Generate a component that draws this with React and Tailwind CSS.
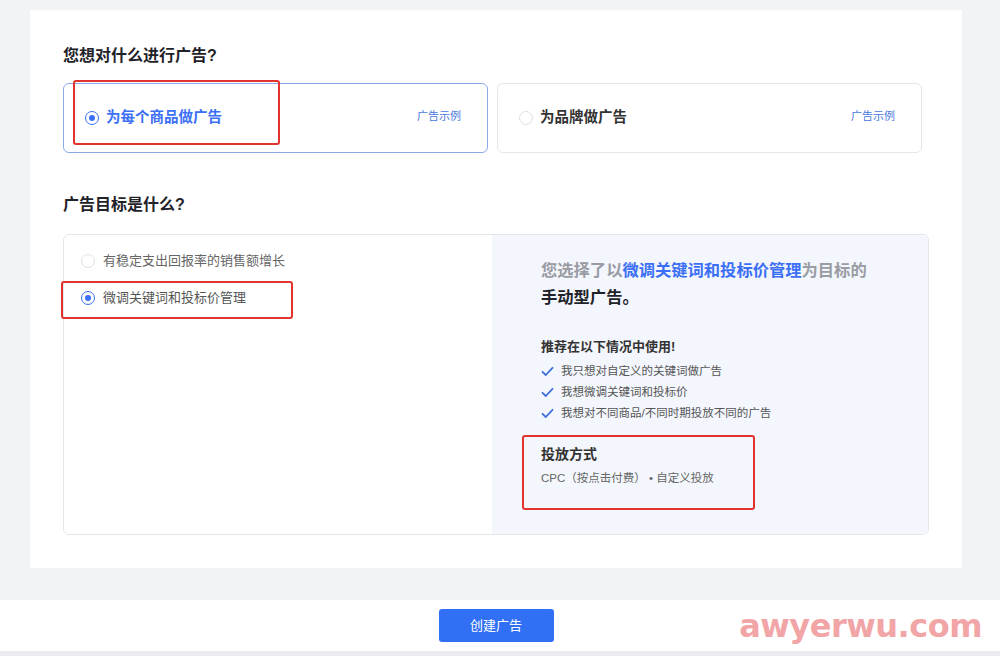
import { useState } from "react";

const FONT = { fontFamily: '"Liberation Sans", "Noto Sans CJK SC", sans-serif' };

function Radio({ checked }) {
  return checked ? (
    <span className="flex h-[14px] w-[14px] shrink-0 items-center justify-center rounded-full border border-[#3b6ff5] bg-white">
      <span className="h-[6px] w-[6px] rounded-full bg-[#3b6ff5]"></span>
    </span>
  ) : (
    <span className="h-[14px] w-[14px] shrink-0 rounded-full border border-[#dcdfe6] bg-white"></span>
  );
}

function Check() {
  return (
    <svg width="13" height="11" viewBox="0 0 13 11" className="shrink-0">
      <path d="M1.5 5.8 L4.8 9 L11.5 1.8" fill="none" stroke="#3d6fdc" strokeWidth="1.8" strokeLinecap="round" strokeLinejoin="round" />
    </svg>
  );
}

function RedMark({ className }) {
  return <div className={"pointer-events-none absolute rounded-[3px] border-2 border-[#e2332f] " + className}></div>;
}

export default function App() {
  const [tipo, setTipo] = useState("produto");
  const [meta, setMeta] = useState(1);

  const usos = [
    "我只想对自定义的关键词做广告",
    "我想微调关键词和投标价",
    "我想对不同商品/不同时期投放不同的广告",
  ];

  return (
    <div style={FONT} className="flex h-[656px] w-[1000px] flex-col overflow-hidden bg-[#f2f3f5]">
      <div className="pl-[30px] pt-[10px]">
        <div className="h-[558px] w-[932px] bg-white pl-[33px] pt-[36px]">
          <h2 className="text-[16px] font-bold leading-[20px] text-[#1f2329]">您想对什么进行广告?</h2>

          <div className="mt-[17px] flex gap-[9px]">
            <div
              onClick={() => setTipo("produto")}
              className="relative flex h-[70px] w-[425px] items-center justify-between rounded-[6px] border border-[#8aa9e8] pl-[21px] pr-[26px]"
            >
              <div className="flex items-center gap-[7px]">
                <Radio checked={tipo === "produto"} />
                <span className="text-[14.5px] font-bold text-[#3b6ff5]">为每个商品做广告</span>
              </div>
              <span className="-mt-[4px] text-[11px] text-[#4a78e0]">广告示例</span>
              <RedMark className="left-[9px] top-[-4px] h-[65px] w-[207px]" />
            </div>
            <div
              onClick={() => setTipo("marca")}
              className="flex h-[70px] w-[425px] items-center justify-between rounded-[6px] border border-[#e4e6eb] pl-[21px] pr-[26px]"
            >
              <div className="flex items-center gap-[7px]">
                <Radio checked={tipo === "marca"} />
                <span className="text-[14.5px] font-bold text-[#333]">为品牌做广告</span>
              </div>
              <span className="-mt-[4px] text-[11px] text-[#4a78e0]">广告示例</span>
            </div>
          </div>

          <h2 className="mt-[42px] text-[16px] font-bold leading-[20px] text-[#1f2329]">广告目标是什么?</h2>

          <div className="mt-[19px] flex h-[301px] w-[866px] rounded-[6px] border border-[#e4e6eb]">
            <div className="relative w-[428px] pl-[17px] pt-[17px]">
              <div onClick={() => setMeta(0)} className="flex h-[18px] items-center gap-[8px]">
                <Radio checked={meta === 0} />
                <span className="text-[13px] text-[#666]">有稳定支出回报率的销售额增长</span>
              </div>
              <div onClick={() => setMeta(1)} className="mt-[19px] flex h-[18px] items-center gap-[8px]">
                <Radio checked={meta === 1} />
                <span className="text-[13px] text-[#555]">微调关键词和投标价管理</span>
              </div>
              <RedMark className="left-[-3px] top-[46px] h-[38px] w-[232px]" />
            </div>

            <div className="relative flex-1 rounded-r-[6px] bg-[#f3f6fc] pl-[49px] pt-[22px]">
              <p className="text-[16.3px] font-bold leading-[27px] text-[#9a9ca3]">
                您选择了以<span className="text-[#3b6ff5]">微调关键词和投标价管理</span>为目标的
              </p>
              <p className="text-[16.3px] font-bold leading-[27px] text-[#1f2329]">手动型广告。</p>

              <p className="mt-[27px] text-[13px] font-bold leading-[18px] text-[#333]">推荐在以下情况中使用!</p>
              <ul className="mt-[5px]">
                {usos.map((item) => (
                  <li key={item} className="flex h-[21px] items-center gap-[7px]">
                    <Check />
                    <span className="text-[11.5px] text-[#555]">{item}</span>
                  </li>
                ))}
              </ul>

              <p className="mt-[20px] text-[14px] font-bold leading-[20px] text-[#333]">投放方式</p>
              <p className="mt-[5px] text-[11.5px] leading-[18px] text-[#666]">CPC（按点击付费） • 自定义投放</p>
              <RedMark className="left-[30px] top-[200px] h-[75px] w-[233px]" />
            </div>
          </div>
        </div>
      </div>

      <div className="relative mt-[32px] flex h-[51px] items-center justify-center bg-white pr-[8px]">
        <button className="h-[33px] w-[115px] rounded-[3px] bg-[#3170f4] text-[13px] text-white">创建广告</button>
        <span
          style={{ fontFamily: '"DejaVu Sans", sans-serif' }}
          className="pointer-events-none absolute right-[18px] top-[8px] text-[32px] font-bold leading-[36px] tracking-[-0.5px] text-[#f2a5a6]"
        >
          awyerwu.com
        </span>
      </div>
      <div className="flex-1 bg-[#e9ebf0]"></div>
    </div>
  );
}
